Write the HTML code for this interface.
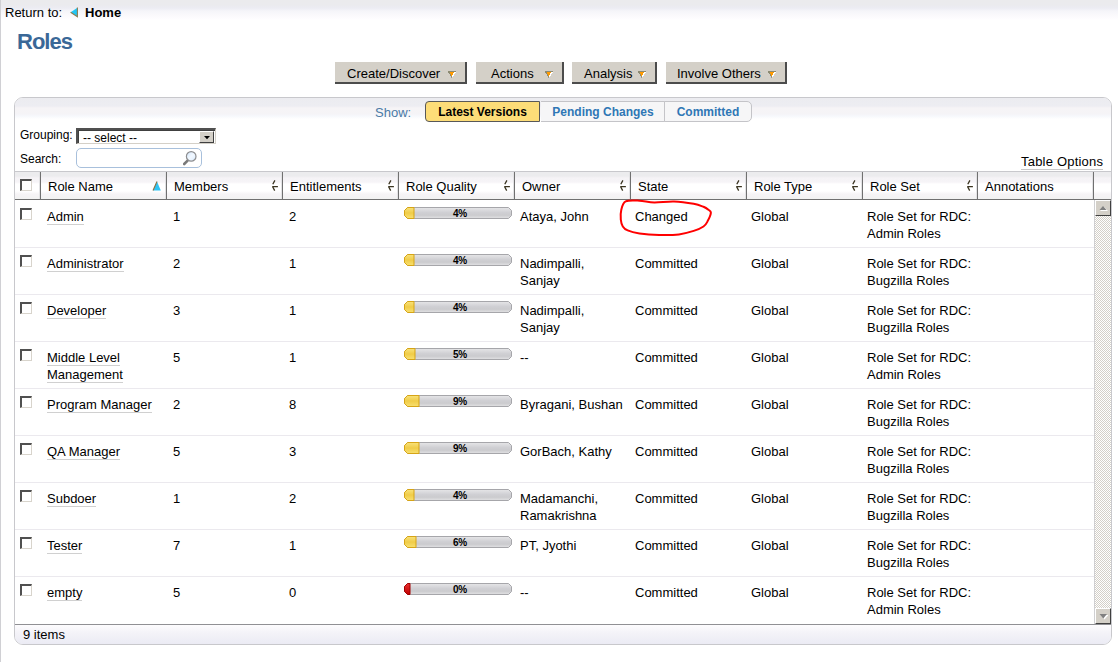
<!DOCTYPE html>
<html><head><meta charset="utf-8">
<style>
*{box-sizing:border-box}
html,body{margin:0;padding:0;width:1118px;height:662px;overflow:hidden;background:#fff;font-family:"Liberation Sans",sans-serif;font-size:13px;color:#000}
.abs{position:absolute}
#leftline{left:0;top:0;width:1px;height:662px;background:#d0d0d4}
#topbar{left:1px;top:0;width:1117px;height:20px;background:linear-gradient(#ebebed 0,#ebebee 5px,#ececf3 8px,#f5f5f9 11px,#faf9fc 15px,#fdfcfe 18px,#fff 20px)}
#ret{left:5px;top:5px;font-size:13px}
#home{left:85px;top:5px;font-weight:bold;font-size:13px}
#homeico{left:70px;top:7px;width:0;height:0;border-top:5px solid transparent;border-bottom:5px solid transparent;border-right:8px solid #3cc0e8}
#title{left:17px;top:30px;font-size:22px;line-height:24px;letter-spacing:-1px;font-weight:bold;color:#3a6897}
.btn{position:absolute;top:62px;height:22px;background:#d4d0c8;border-right:2px solid #4c4c4c;border-bottom:2px solid #4c4c4c;font-size:13px;line-height:20px;white-space:nowrap}
.btn span.t{position:absolute;top:2px}
.btn svg{position:absolute;top:9px}
#panel{left:14px;top:97px;width:1098px;height:548px;border:1px solid #c8c8cc;border-radius:9px;overflow:hidden;background:#fff}
#panelgrad{left:0;top:0;width:100%;height:21px;background:linear-gradient(#ececf0 0,#ededf2 8px,#f6f4f6 10px,#f5f4f7 16px,#f6f8fc 18px,#fff 21px)}
#show{left:375px;top:105px;color:#4a7aa6;font-size:13px}
.seg{position:absolute;top:101px;height:21px;border:1px solid #c4c4c8;font-weight:bold;font-size:12px;line-height:19px;text-align:center;color:#2f77b5;background:#f6f6f7}
#g1{left:425px;width:115px;background:#fddd78;border-color:#585858;color:#000;border-radius:4px 0 0 4px}
#g2{left:541px;width:124px;border-left:none;border-right:none}
#g3{left:664px;width:88px;border-radius:0 5px 5px 0;border-left:1px solid #c4c4c8}
.seg span{position:relative;top:1px}
#grp{left:20px;top:128px;font-size:12px;line-height:14px}
#srch{left:20px;top:152px;font-size:12px;line-height:14px}
#sel{left:76px;top:128px;width:140px;height:16px;border-top:2px solid #505050;border-left:2px solid #505050;border-right:1px solid #d4d0c8;border-bottom:1px solid #d4d0c8;box-shadow:inset 1px 1px 0 #404040;background:#fff;font-size:12px;line-height:14px;padding-left:5px;padding-top:1px}
#selbtn{left:199px;top:131px;width:15px;height:12px;background:#d4d0c8;border-right:1px solid #404040;border-bottom:1px solid #404040;border-top:1px solid #fff;border-left:1px solid #fff}
#inp{left:76px;top:148px;width:126px;height:20px;border:1px solid #a8c0dc;border-radius:5px;background:#fff}
#topts{left:1021px;top:154px;letter-spacing:0.2px;border-bottom:1px solid #c8c8c8;line-height:15px}
#thead{left:15px;top:171px;width:1096px;height:29px;border-top:1px solid #c8c8cc;border-bottom:1px solid #707070;background:linear-gradient(#ececee 0,#ececee 4px,#f5f3f6 6px,#f6f4f7 10px,#fff 12px,#fff 19px,#f6f4f6 22px,#f2f2f2 27px)}
.sep{position:absolute;top:172px;width:1px;height:27px;background:#707070;box-shadow:-1px 0 0 #e2e2e4}
.th{position:absolute;top:182px;line-height:10px;white-space:nowrap}
.srt{position:absolute;top:180px}
.row{position:absolute;left:15px;width:1079px;height:47px;border-bottom:1px solid #ebe9ee}
.row.last{border-bottom:none}
.c{position:absolute;top:7px;line-height:17px;white-space:nowrap}
.lnk span{border-bottom:1px solid #d0d0d0;line-height:15px;display:inline-block}
.cb{position:absolute;width:12px;height:12px;border-top:2px solid #505050;border-left:2px solid #505050;border-right:1px solid #d8d4cc;border-bottom:1px solid #d8d4cc;background:#fff}
.pb{position:absolute;width:108px;height:12px;border:1px solid #a8a8ac;border-radius:4px;background:linear-gradient(#e4e4e6,#d0d0d4 40%,#cacacc 60%,#e0e0e2)}
.pf{position:absolute;left:-1px;top:-1px;height:12px;border:1px solid #d8a418;border-right:none;border-radius:4px 0 0 4px;background:linear-gradient(#f6e070,#f0cc48 50%,#f6dc6a)}
.pb2{position:absolute;width:109px;height:13px}
.pb2 svg{position:absolute;left:0;top:0}
.pf.red{border-color:#a00000;background:linear-gradient(#e03030,#c00000)}
.pt{position:absolute;left:3px;top:1px;width:106px;text-align:center;font-size:10px;font-weight:bold;line-height:11px;letter-spacing:-0.3px}
#tbody{left:14px;top:200px;width:1080px;height:424px;overflow:hidden}
#tblbottom{left:15px;top:624px;width:1096px;height:1px;background:#909094}
#footer{left:15px;top:625px;width:1096px;height:19px;background:linear-gradient(#fdfcfe,#f4f3f8 40%,#ebebf4);border-radius:0 0 8px 8px}
#items{left:23px;top:627px}
#sb{left:1094px;top:200px;width:17px;height:424px;border-left:1px solid #d0d0d2;background-color:#f0f0f0;background-image:repeating-conic-gradient(#d4d0c8 0 25%,#fff 0 50%);background-size:2px 2px}
.sbb{position:absolute;left:0;width:16px;height:16px;background:#d4d0c8;border-right:1px solid #404040;border-bottom:1px solid #404040;border-top:1px solid #fff;border-left:1px solid #fff}
</style></head><body>
<svg width="0" height="0" style="position:absolute"><defs><linearGradient id="gg" x1="0" y1="0" x2="0" y2="1"><stop offset="0" stop-color="#e6e6e8"/><stop offset="0.45" stop-color="#d0d0d4"/><stop offset="0.7" stop-color="#cbcbce"/><stop offset="1" stop-color="#e2e2e4"/></linearGradient><linearGradient id="gy" x1="0" y1="0" x2="0" y2="1"><stop offset="0" stop-color="#f8e27a"/><stop offset="0.5" stop-color="#f0cc48"/><stop offset="1" stop-color="#f8e070"/></linearGradient><linearGradient id="gr" x1="0" y1="0" x2="0" y2="1"><stop offset="0" stop-color="#e83030"/><stop offset="1" stop-color="#c00000"/></linearGradient></defs></svg>
<div id="leftline" class="abs"></div>
<div id="topbar" class="abs"></div>
<div id="ret" class="abs">Return to:</div>
<svg class="abs" style="left:70px;top:7px" width="9" height="11"><path d="M0.6 5.2L7.4 0.8V9.8Z" fill="#22c6f6"/><path d="M0.6 5.2L7.4 9.8V0.6" stroke="#8c7c50" stroke-width="1.1" fill="none"/></svg>
<div id="home" class="abs">Home</div>
<div id="title" class="abs">Roles</div>

<div class="btn" style="left:335px;width:132px"><span class="t" style="left:12px">Create/Discover</span><svg style="left:113px" width="9" height="7" shape-rendering="crispEdges"><rect x="0" y="0" width="8" height="1" fill="#8c8a72"/><rect x="0" y="1" width="2" height="1" fill="#8c8a72"/><rect x="2" y="1" width="4" height="1" fill="#ff9a00"/><rect x="6" y="1" width="2" height="1" fill="#fff"/><rect x="1" y="2" width="1" height="1" fill="#8c8a72"/><rect x="2" y="2" width="3" height="1" fill="#ff9a00"/><rect x="5" y="2" width="2" height="1" fill="#fff"/><rect x="2" y="3" width="1" height="1" fill="#8c8a72"/><rect x="3" y="3" width="2" height="1" fill="#ff9a00"/><rect x="5" y="3" width="1" height="1" fill="#fff"/><rect x="2" y="4" width="1" height="1" fill="#8c8a72"/><rect x="3" y="4" width="1" height="1" fill="#ff9a00"/><rect x="4" y="4" width="2" height="1" fill="#fff"/><rect x="3" y="5" width="1" height="1" fill="#8c8a72"/><rect x="4" y="5" width="1" height="1" fill="#fff"/><rect x="3" y="6" width="1" height="1" fill="#a09e88"/></svg></div>
<div class="btn" style="left:476px;width:88px"><span class="t" style="left:15px">Actions</span><svg style="left:69px" width="9" height="7" shape-rendering="crispEdges"><rect x="0" y="0" width="8" height="1" fill="#8c8a72"/><rect x="0" y="1" width="2" height="1" fill="#8c8a72"/><rect x="2" y="1" width="4" height="1" fill="#ff9a00"/><rect x="6" y="1" width="2" height="1" fill="#fff"/><rect x="1" y="2" width="1" height="1" fill="#8c8a72"/><rect x="2" y="2" width="3" height="1" fill="#ff9a00"/><rect x="5" y="2" width="2" height="1" fill="#fff"/><rect x="2" y="3" width="1" height="1" fill="#8c8a72"/><rect x="3" y="3" width="2" height="1" fill="#ff9a00"/><rect x="5" y="3" width="1" height="1" fill="#fff"/><rect x="2" y="4" width="1" height="1" fill="#8c8a72"/><rect x="3" y="4" width="1" height="1" fill="#ff9a00"/><rect x="4" y="4" width="2" height="1" fill="#fff"/><rect x="3" y="5" width="1" height="1" fill="#8c8a72"/><rect x="4" y="5" width="1" height="1" fill="#fff"/><rect x="3" y="6" width="1" height="1" fill="#a09e88"/></svg></div>
<div class="btn" style="left:572px;width:85px"><span class="t" style="left:12px">Analysis</span><svg style="left:66px" width="9" height="7" shape-rendering="crispEdges"><rect x="0" y="0" width="8" height="1" fill="#8c8a72"/><rect x="0" y="1" width="2" height="1" fill="#8c8a72"/><rect x="2" y="1" width="4" height="1" fill="#ff9a00"/><rect x="6" y="1" width="2" height="1" fill="#fff"/><rect x="1" y="2" width="1" height="1" fill="#8c8a72"/><rect x="2" y="2" width="3" height="1" fill="#ff9a00"/><rect x="5" y="2" width="2" height="1" fill="#fff"/><rect x="2" y="3" width="1" height="1" fill="#8c8a72"/><rect x="3" y="3" width="2" height="1" fill="#ff9a00"/><rect x="5" y="3" width="1" height="1" fill="#fff"/><rect x="2" y="4" width="1" height="1" fill="#8c8a72"/><rect x="3" y="4" width="1" height="1" fill="#ff9a00"/><rect x="4" y="4" width="2" height="1" fill="#fff"/><rect x="3" y="5" width="1" height="1" fill="#8c8a72"/><rect x="4" y="5" width="1" height="1" fill="#fff"/><rect x="3" y="6" width="1" height="1" fill="#a09e88"/></svg></div>
<div class="btn" style="left:666px;width:121px"><span class="t" style="left:11px">Involve Others</span><svg style="left:102px" width="9" height="7" shape-rendering="crispEdges"><rect x="0" y="0" width="8" height="1" fill="#8c8a72"/><rect x="0" y="1" width="2" height="1" fill="#8c8a72"/><rect x="2" y="1" width="4" height="1" fill="#ff9a00"/><rect x="6" y="1" width="2" height="1" fill="#fff"/><rect x="1" y="2" width="1" height="1" fill="#8c8a72"/><rect x="2" y="2" width="3" height="1" fill="#ff9a00"/><rect x="5" y="2" width="2" height="1" fill="#fff"/><rect x="2" y="3" width="1" height="1" fill="#8c8a72"/><rect x="3" y="3" width="2" height="1" fill="#ff9a00"/><rect x="5" y="3" width="1" height="1" fill="#fff"/><rect x="2" y="4" width="1" height="1" fill="#8c8a72"/><rect x="3" y="4" width="1" height="1" fill="#ff9a00"/><rect x="4" y="4" width="2" height="1" fill="#fff"/><rect x="3" y="5" width="1" height="1" fill="#8c8a72"/><rect x="4" y="5" width="1" height="1" fill="#fff"/><rect x="3" y="6" width="1" height="1" fill="#a09e88"/></svg></div>

<div id="panel" class="abs">
  <div id="panelgrad" class="abs"></div>
</div>
<div id="show" class="abs">Show:</div>
<div class="seg" id="g1"><span>Latest Versions</span></div>
<div class="seg" id="g2"><span>Pending Changes</span></div>
<div class="seg" id="g3"><span>Committed</span></div>

<div id="grp" class="abs">Grouping:</div>
<div id="sel" class="abs">-- select --</div>
<div id="selbtn" class="abs"><svg style="position:absolute;left:4px;top:4px" width="6" height="4"><path d="M0 0H6L3 3.2Z" fill="#000"/></svg></div>
<div id="srch" class="abs">Search:</div>
<div id="inp" class="abs"><svg style="position:absolute;left:106px;top:2px" width="15" height="15"><defs><linearGradient id="mg" x1="0" y1="0" x2="1" y2="1"><stop offset="0" stop-color="#cfe4fb"/><stop offset="0.5" stop-color="#f2f8ff"/><stop offset="1" stop-color="#d8eafc"/></linearGradient></defs><path d="M4.6 9.6L1.2 13" stroke="#7a7a7a" stroke-width="2.6" stroke-linecap="round"/><circle cx="8.2" cy="5.4" r="4.8" fill="url(#mg)" stroke="#8e8e90" stroke-width="1.2"/></svg></div>
<div id="topts" class="abs">Table Options</div>

<div id="thead" class="abs"></div>
<div class="cb" style="left:20px;top:179px"></div>
<div class="sep" style="left:40px"></div>
<div class="sep" style="left:166px"></div>
<div class="sep" style="left:282px"></div>
<div class="sep" style="left:398px"></div>
<div class="sep" style="left:514px"></div>
<div class="sep" style="left:630px"></div>
<div class="sep" style="left:746px"></div>
<div class="sep" style="left:862px"></div>
<div class="sep" style="left:977px"></div>
<div class="sep" style="left:1093px"></div>
<div class="th" style="left:48px">Role Name</div>
<svg class="srt" style="left:152px;top:181px" width="9" height="10"><path d="M5 0.5L8.8 9.5H1.2Z" fill="#30c4f4"/><path d="M5 0.5L1 9.5" stroke="#8a7040" stroke-width="1.1"/></svg>
<div class="th" style="left:174px">Members</div>
<svg class="srt" style="left:272px" width="8" height="12"><path d="M2.9 0.4L0.8 4.3M0.2 6.6H5.9M0.6 6.8L2.7 10.6" stroke="#3a3420" stroke-width="1.3" fill="none"/></svg>
<div class="th" style="left:290px">Entitlements</div>
<svg class="srt" style="left:388px" width="8" height="12"><path d="M2.9 0.4L0.8 4.3M0.2 6.6H5.9M0.6 6.8L2.7 10.6" stroke="#3a3420" stroke-width="1.3" fill="none"/></svg>
<div class="th" style="left:406px">Role Quality</div>
<svg class="srt" style="left:504px" width="8" height="12"><path d="M2.9 0.4L0.8 4.3M0.2 6.6H5.9M0.6 6.8L2.7 10.6" stroke="#3a3420" stroke-width="1.3" fill="none"/></svg>
<div class="th" style="left:522px">Owner</div>
<svg class="srt" style="left:620px" width="8" height="12"><path d="M2.9 0.4L0.8 4.3M0.2 6.6H5.9M0.6 6.8L2.7 10.6" stroke="#3a3420" stroke-width="1.3" fill="none"/></svg>
<div class="th" style="left:638px">State</div>
<svg class="srt" style="left:736px" width="8" height="12"><path d="M2.9 0.4L0.8 4.3M0.2 6.6H5.9M0.6 6.8L2.7 10.6" stroke="#3a3420" stroke-width="1.3" fill="none"/></svg>
<div class="th" style="left:754px">Role Type</div>
<svg class="srt" style="left:852px" width="8" height="12"><path d="M2.9 0.4L0.8 4.3M0.2 6.6H5.9M0.6 6.8L2.7 10.6" stroke="#3a3420" stroke-width="1.3" fill="none"/></svg>
<div class="th" style="left:870px">Role Set</div>
<svg class="srt" style="left:967px" width="8" height="12"><path d="M2.9 0.4L0.8 4.3M0.2 6.6H5.9M0.6 6.8L2.7 10.6" stroke="#3a3420" stroke-width="1.3" fill="none"/></svg>
<div class="th" style="left:985px">Annotations</div>

<div class="row" style="top:201px">
<div class="cb" style="left:5px;top:7px"></div>
<div class="c lnk" style="left:32px"><span>Admin</span></div>
<div class="c" style="left:158px">1</div>
<div class="c" style="left:274px">2</div>
<div class="pb2" style="left:389px;top:6px"><svg width="109" height="12"><path d="M3.5 0.5H104.5L107.5 3.5V8.5L104.5 11.5H3.5L0.5 8.5V3.5Z" fill="url(#gg)" stroke="#a6a6aa"/><path d="M3.5 0.5H10V11.5H3.5L0.5 8.5V3.5Z" fill="url(#gy)" stroke="#d6a416"/></svg><div class="pt">4%</div></div>
<div class="c" style="left:505px">Ataya, John</div>
<div class="c" style="left:620px">Changed</div>
<div class="c" style="left:736px">Global</div>
<div class="c" style="left:852px">Role Set for RDC:<br>Admin Roles</div>
</div>
<div class="row" style="top:248px">
<div class="cb" style="left:5px;top:7px"></div>
<div class="c lnk" style="left:32px"><span>Administrator</span></div>
<div class="c" style="left:158px">2</div>
<div class="c" style="left:274px">1</div>
<div class="pb2" style="left:389px;top:6px"><svg width="109" height="12"><path d="M3.5 0.5H104.5L107.5 3.5V8.5L104.5 11.5H3.5L0.5 8.5V3.5Z" fill="url(#gg)" stroke="#a6a6aa"/><path d="M3.5 0.5H10V11.5H3.5L0.5 8.5V3.5Z" fill="url(#gy)" stroke="#d6a416"/></svg><div class="pt">4%</div></div>
<div class="c" style="left:505px">Nadimpalli,<br>Sanjay</div>
<div class="c" style="left:620px">Committed</div>
<div class="c" style="left:736px">Global</div>
<div class="c" style="left:852px">Role Set for RDC:<br>Bugzilla Roles</div>
</div>
<div class="row" style="top:295px">
<div class="cb" style="left:5px;top:7px"></div>
<div class="c lnk" style="left:32px"><span>Developer</span></div>
<div class="c" style="left:158px">3</div>
<div class="c" style="left:274px">1</div>
<div class="pb2" style="left:389px;top:6px"><svg width="109" height="12"><path d="M3.5 0.5H104.5L107.5 3.5V8.5L104.5 11.5H3.5L0.5 8.5V3.5Z" fill="url(#gg)" stroke="#a6a6aa"/><path d="M3.5 0.5H10V11.5H3.5L0.5 8.5V3.5Z" fill="url(#gy)" stroke="#d6a416"/></svg><div class="pt">4%</div></div>
<div class="c" style="left:505px">Nadimpalli,<br>Sanjay</div>
<div class="c" style="left:620px">Committed</div>
<div class="c" style="left:736px">Global</div>
<div class="c" style="left:852px">Role Set for RDC:<br>Bugzilla Roles</div>
</div>
<div class="row" style="top:342px">
<div class="cb" style="left:5px;top:7px"></div>
<div class="c lnk" style="left:32px"><span>Middle Level</span><br><span>Management</span></div>
<div class="c" style="left:158px">5</div>
<div class="c" style="left:274px">1</div>
<div class="pb2" style="left:389px;top:6px"><svg width="109" height="12"><path d="M3.5 0.5H104.5L107.5 3.5V8.5L104.5 11.5H3.5L0.5 8.5V3.5Z" fill="url(#gg)" stroke="#a6a6aa"/><path d="M3.5 0.5H11V11.5H3.5L0.5 8.5V3.5Z" fill="url(#gy)" stroke="#d6a416"/></svg><div class="pt">5%</div></div>
<div class="c" style="left:505px">--</div>
<div class="c" style="left:620px">Committed</div>
<div class="c" style="left:736px">Global</div>
<div class="c" style="left:852px">Role Set for RDC:<br>Admin Roles</div>
</div>
<div class="row" style="top:389px">
<div class="cb" style="left:5px;top:7px"></div>
<div class="c lnk" style="left:32px"><span>Program Manager</span></div>
<div class="c" style="left:158px">2</div>
<div class="c" style="left:274px">8</div>
<div class="pb2" style="left:389px;top:6px"><svg width="109" height="12"><path d="M3.5 0.5H104.5L107.5 3.5V8.5L104.5 11.5H3.5L0.5 8.5V3.5Z" fill="url(#gg)" stroke="#a6a6aa"/><path d="M3.5 0.5H15V11.5H3.5L0.5 8.5V3.5Z" fill="url(#gy)" stroke="#d6a416"/></svg><div class="pt">9%</div></div>
<div class="c" style="left:505px">Byragani, Bushan</div>
<div class="c" style="left:620px">Committed</div>
<div class="c" style="left:736px">Global</div>
<div class="c" style="left:852px">Role Set for RDC:<br>Bugzilla Roles</div>
</div>
<div class="row" style="top:436px">
<div class="cb" style="left:5px;top:7px"></div>
<div class="c lnk" style="left:32px"><span>QA Manager</span></div>
<div class="c" style="left:158px">5</div>
<div class="c" style="left:274px">3</div>
<div class="pb2" style="left:389px;top:6px"><svg width="109" height="12"><path d="M3.5 0.5H104.5L107.5 3.5V8.5L104.5 11.5H3.5L0.5 8.5V3.5Z" fill="url(#gg)" stroke="#a6a6aa"/><path d="M3.5 0.5H15V11.5H3.5L0.5 8.5V3.5Z" fill="url(#gy)" stroke="#d6a416"/></svg><div class="pt">9%</div></div>
<div class="c" style="left:505px">GorBach, Kathy</div>
<div class="c" style="left:620px">Committed</div>
<div class="c" style="left:736px">Global</div>
<div class="c" style="left:852px">Role Set for RDC:<br>Bugzilla Roles</div>
</div>
<div class="row" style="top:483px">
<div class="cb" style="left:5px;top:7px"></div>
<div class="c lnk" style="left:32px"><span>Subdoer</span></div>
<div class="c" style="left:158px">1</div>
<div class="c" style="left:274px">2</div>
<div class="pb2" style="left:389px;top:6px"><svg width="109" height="12"><path d="M3.5 0.5H104.5L107.5 3.5V8.5L104.5 11.5H3.5L0.5 8.5V3.5Z" fill="url(#gg)" stroke="#a6a6aa"/><path d="M3.5 0.5H10V11.5H3.5L0.5 8.5V3.5Z" fill="url(#gy)" stroke="#d6a416"/></svg><div class="pt">4%</div></div>
<div class="c" style="left:505px">Madamanchi,<br>Ramakrishna</div>
<div class="c" style="left:620px">Committed</div>
<div class="c" style="left:736px">Global</div>
<div class="c" style="left:852px">Role Set for RDC:<br>Bugzilla Roles</div>
</div>
<div class="row" style="top:530px">
<div class="cb" style="left:5px;top:7px"></div>
<div class="c lnk" style="left:32px"><span>Tester</span></div>
<div class="c" style="left:158px">7</div>
<div class="c" style="left:274px">1</div>
<div class="pb2" style="left:389px;top:6px"><svg width="109" height="12"><path d="M3.5 0.5H104.5L107.5 3.5V8.5L104.5 11.5H3.5L0.5 8.5V3.5Z" fill="url(#gg)" stroke="#a6a6aa"/><path d="M3.5 0.5H12V11.5H3.5L0.5 8.5V3.5Z" fill="url(#gy)" stroke="#d6a416"/></svg><div class="pt">6%</div></div>
<div class="c" style="left:505px">PT, Jyothi</div>
<div class="c" style="left:620px">Committed</div>
<div class="c" style="left:736px">Global</div>
<div class="c" style="left:852px">Role Set for RDC:<br>Bugzilla Roles</div>
</div>
<div class="row last" style="top:577px">
<div class="cb" style="left:5px;top:7px"></div>
<div class="c lnk" style="left:32px"><span>empty</span></div>
<div class="c" style="left:158px">5</div>
<div class="c" style="left:274px">0</div>
<div class="pb2" style="left:389px;top:6px"><svg width="109" height="12"><path d="M3.5 0.5H104.5L107.5 3.5V8.5L104.5 11.5H3.5L0.5 8.5V3.5Z" fill="url(#gg)" stroke="#a6a6aa"/><path d="M3.5 0.5H6V11.5H3.5L0.5 8.5V3.5Z" fill="url(#gr)" stroke="#a00000"/></svg><div class="pt">0%</div></div>
<div class="c" style="left:505px">--</div>
<div class="c" style="left:620px">Committed</div>
<div class="c" style="left:736px">Global</div>
<div class="c" style="left:852px">Role Set for RDC:<br>Admin Roles</div>
</div>

<div id="sb" class="abs"><div class="sbb" style="top:0"><svg style="position:absolute;left:3px;top:4px" width="9" height="7"><path d="M5 2L9 6H1Z" fill="#fff"/><path d="M4 1L7.5 5H0.5Z" fill="#808080"/></svg></div><div class="sbb" style="top:408px"><svg style="position:absolute;left:3px;top:5px" width="9" height="7"><path d="M1.5 1H9.5L5.5 5.5Z" fill="#fff"/><path d="M0.5 0H8L4.25 4.5Z" fill="#808080"/></svg></div></div>
<div id="tblbottom" class="abs"></div>
<div id="footer" class="abs"></div>
<div id="items" class="abs">9 items</div>

<svg class="abs" style="left:0;top:0" width="1118" height="662"><path d="M625.7 201.4C628.8 199.9 634.8 200.5 639.5 200.7C644.3 200.9 648.5 202.3 654.3 202.4C660.0 202.5 667.4 201.2 674.0 201.4C680.5 201.6 688.7 202.8 693.7 203.7C698.6 204.6 701.0 205.8 703.5 206.8C706.0 207.8 707.2 208.8 708.4 209.8C709.7 210.7 711.0 210.7 710.9 212.7C710.7 214.7 708.7 219.3 707.4 221.6C706.2 223.9 705.8 224.9 703.5 226.5C701.2 228.1 697.8 229.6 693.7 230.9C689.6 232.2 684.6 233.7 678.9 234.4C673.2 235.0 665.8 235.0 659.2 234.9C652.7 234.7 644.8 234.1 639.5 233.4C634.3 232.6 630.5 231.6 627.7 230.4C624.9 229.3 623.9 228.3 622.8 226.5C621.6 224.7 621.1 222.4 620.8 219.6C620.6 216.8 620.5 212.8 621.3 209.8C622.1 206.7 622.7 202.9 625.7 201.4Z" fill="none" stroke="#f00" stroke-width="2"/></svg>
</body></html>
